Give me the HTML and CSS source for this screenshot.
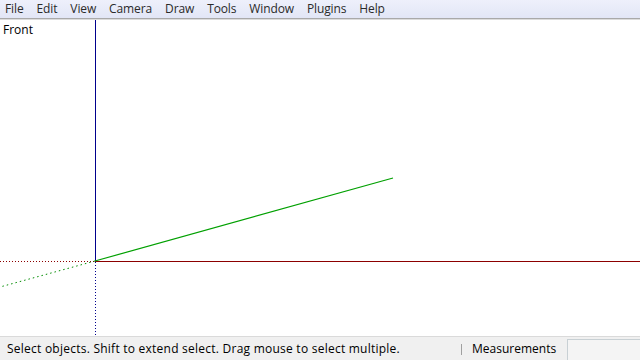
FILE: index.html
```html
<!DOCTYPE html>
<html>
<head>
<meta charset="utf-8">
<link rel="stylesheet" href="styles.css">
</head>
<body>
<div class="app">
  <nav class="menubar">
    <span class="menu">File</span>
    <span class="menu">Edit</span>
    <span class="menu">View</span>
    <span class="menu">Camera</span>
    <span class="menu">Draw</span>
    <span class="menu">Tools</span>
    <span class="menu">Window</span>
    <span class="menu">Plugins</span>
    <span class="menu">Help</span>
  </nav>
  <main class="viewport">
    <svg class="scene" width="640" height="316" viewBox="0 0 640 316" shape-rendering="crispEdges">
      <line x1="95.5" y1="0" x2="95.5" y2="241" stroke="#00008c" stroke-width="1"/>
      <line x1="95.5" y1="242" x2="95.5" y2="316" stroke="#00008c" stroke-width="1" stroke-dasharray="1 2"/>
      <line x1="95" y1="241.5" x2="640" y2="241.5" stroke="#8c0000" stroke-width="1"/>
      <line x1="0" y1="241.5" x2="95" y2="241.5" stroke="#8c0000" stroke-width="1" stroke-dasharray="1 2"/>
      <line x1="95" y1="241" x2="0" y2="267" stroke="#008c00" stroke-width="1" stroke-dasharray="1.5 3" shape-rendering="auto"/>
      <line x1="95" y1="241" x2="393" y2="158" stroke="#00a000" stroke-width="1.2" shape-rendering="auto"/>
    </svg>
    <div class="view-label">Front</div>
  </main>
  <footer class="statusbar">
    <div class="status-text">Select objects. Shift to extend select. Drag mouse to select multiple.</div>
    <div class="sep"></div>
    <div class="meas-label">Measurements</div>
    <div class="meas-box"></div>
  </footer>
</div>
</body>
</html>
```
FILE: styles.css
```css
html, body {
  margin: 0;
  padding: 0;
  width: 640px;
  height: 360px;
  overflow: hidden;
  background: #ffffff;
  font-family: "Open Sans", "DejaVu Sans", sans-serif;
}
.app {
  display: flex;
  flex-direction: column;
  width: 640px;
  height: 360px;
}
.menubar {
  height: 18px;
  display: flex;
  align-items: center;
  padding-left: 5px;
  background: linear-gradient(#eef0fb, #e2e6f6);
  border-bottom: 1px solid #a9a9a9;
  box-shadow: 0 1px 0 #dcdcdc;
  font-size: 12px;
  color: #2a2a2a;
}
.menu {
  margin-right: 13px;
  letter-spacing: -0.12px;
}
.viewport {
  position: relative;
  flex: 1;
  background: #ffffff;
  margin-top: 1px;
}
.scene {
  display: block;
}
.view-label {
  position: absolute;
  left: 3px;
  top: 1px;
  font-size: 12px;
  color: #000;
}
.statusbar {
  height: 24px;
  display: flex;
  align-items: center;
  background: #f0f0f0;
  border-top: 1px solid #dadada;
  font-size: 12px;
  color: #000;
}
.status-text {
  padding-left: 7px;
  width: 454px;
  white-space: nowrap;
  letter-spacing: 0.24px;
}
.sep {
  width: 1px;
  height: 11px;
  background: #a0a0a0;
  margin-top: 2px;
}
.meas-label {
  padding-left: 10px;
  width: 85px;
}
.meas-box {
  align-self: flex-end;
  flex: 1;
  height: 20px;
  margin-left: 10px;
  border: 1px solid #c8d0d4;
  border-right: none;
  border-bottom: none;
  background: #f4f4f4;
}
```
